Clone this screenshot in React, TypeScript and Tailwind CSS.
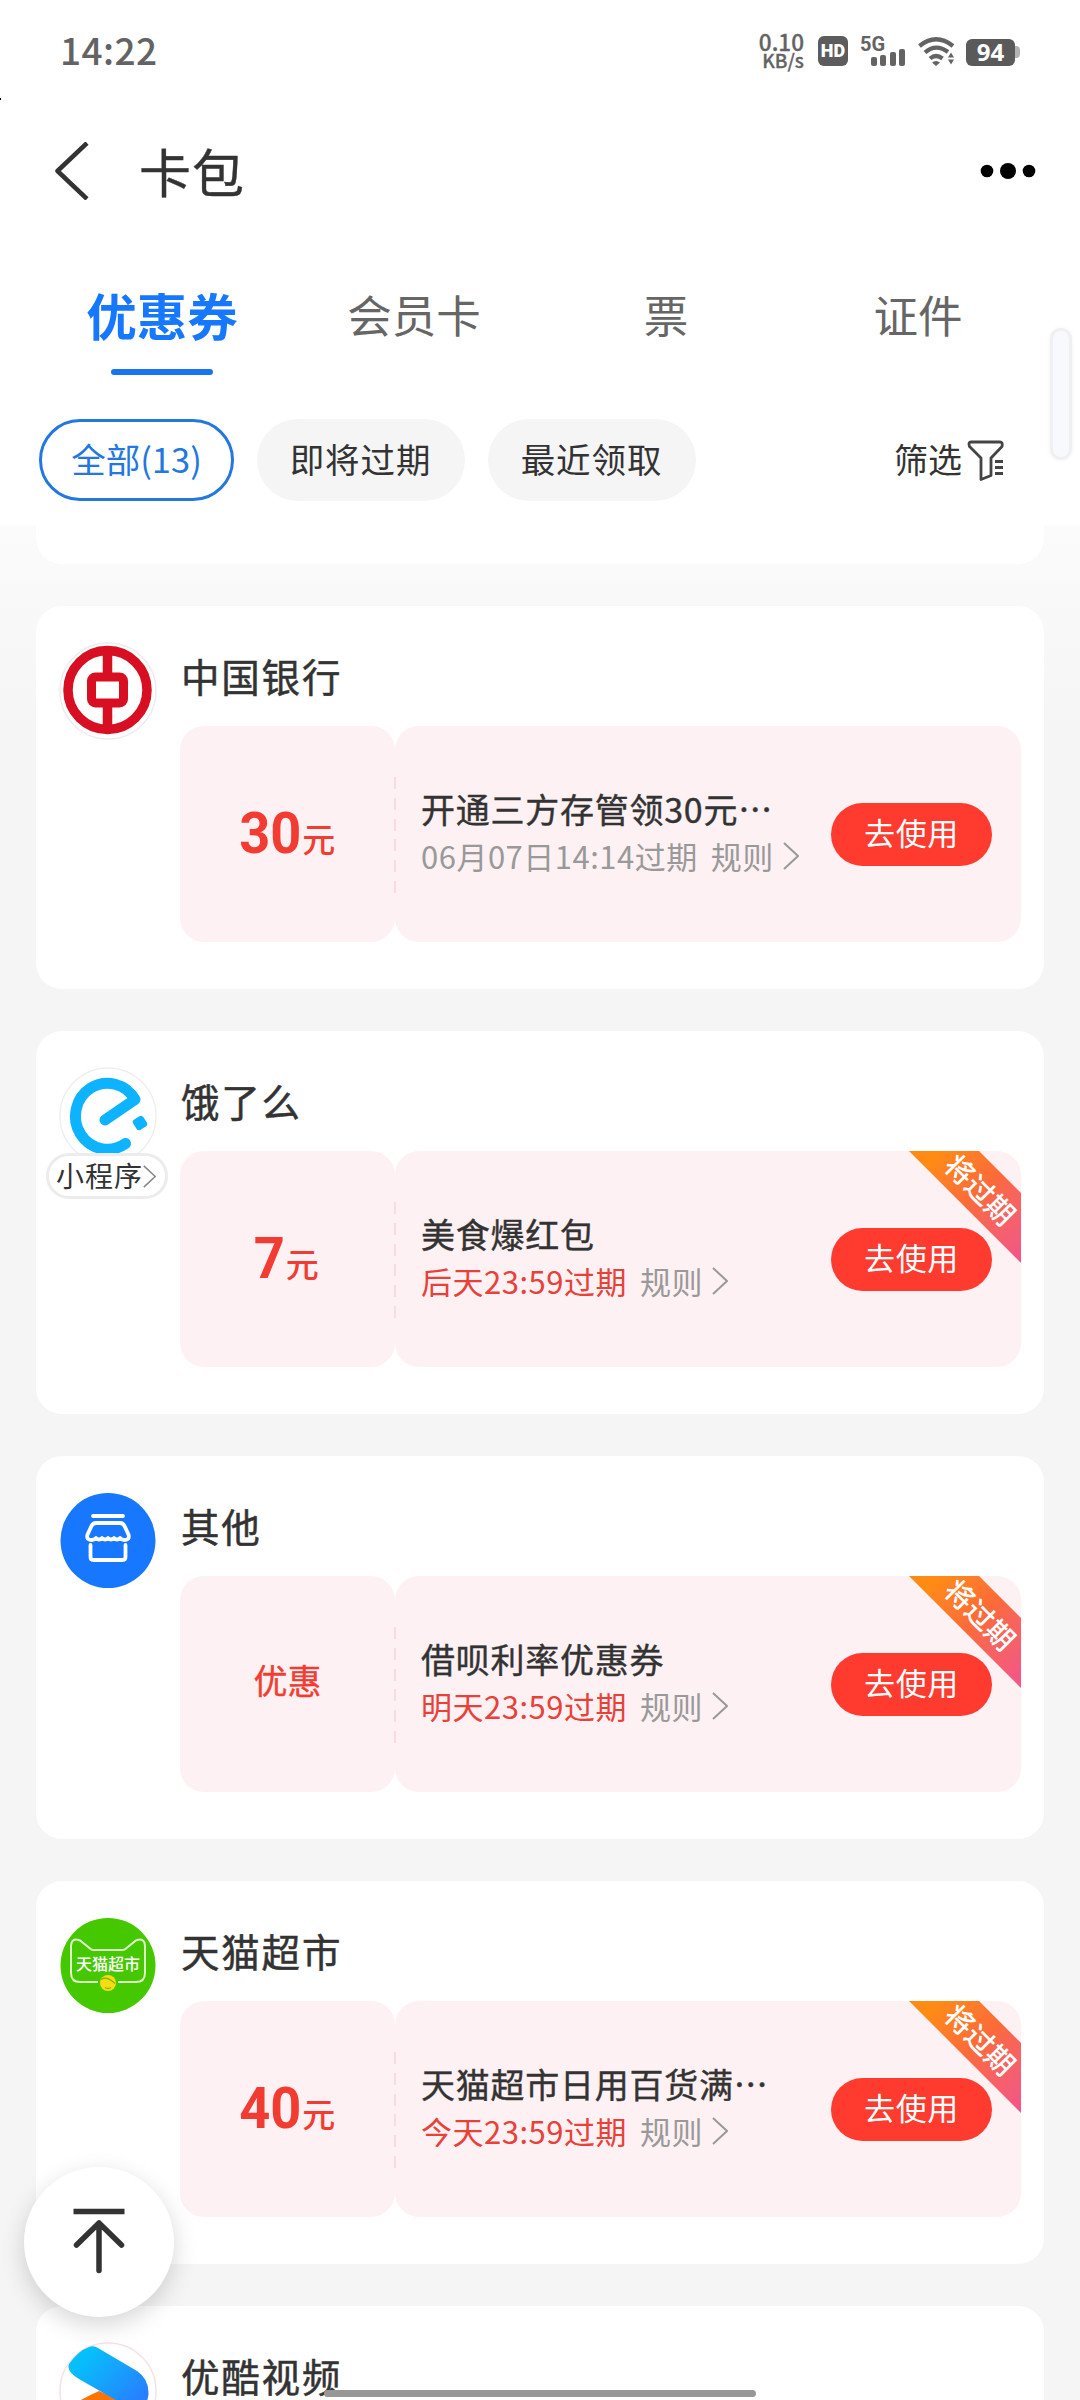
import type { ReactNode } from "react";

type Offer = {
  amount?: string;
  title: string;
  expire: string;
  urgent?: boolean;
};

type Shop = {
  name: string;
  logo: ReactNode;
  mini?: boolean;
  offer?: Offer;
};

function BankLogo() {
  return (
    <svg viewBox="0 0 98 98" className="size-[98px]">
      <circle cx="49" cy="49" r="48" fill="#fff" stroke="#ececec" strokeWidth="1.5" />
      <g transform="translate(-0.5 -1)">
        <circle cx="49" cy="49" r="39.5" fill="none" stroke="#d80f22" strokeWidth="9.5" />
        <rect x="33" y="36" width="32" height="26" rx="4" fill="none" stroke="#d80f22" strokeWidth="9" />
        <path d="M49 12v21M49 66v21" stroke="#d80f22" strokeWidth="9.5" />
      </g>
    </svg>
  );
}

function ElemeLogo() {
  return (
    <svg viewBox="0 0 98 98" className="size-[98px]">
      <circle cx="49" cy="49" r="48" fill="#fff" stroke="#efefef" strokeWidth="1.5" />
      <path
        d="M46 53 L76 32.5 A32 33 0 1 0 66.500 76.5"
        fill="none"
        stroke="#0eb3ff"
        strokeWidth="11"
        strokeLinecap="round"
        strokeLinejoin="round"
      />
      <rect x="75" y="50" width="12" height="12" rx="3" fill="#0eb3ff" transform="rotate(-32 81 56)" />
    </svg>
  );
}

function OtherLogo() {
  return (
    <svg viewBox="0 0 98 98" className="size-[98px]">
      <circle cx="49" cy="48.5" r="47.5" fill="#1777ff" />
      <g fill="none" stroke="#fff" strokeWidth="3.800" strokeLinecap="round" strokeLinejoin="round">
        <path d="M34 24h30" />
        <path d="M37 31h24q3 0 4.500 3l4 8.500q1.500 5.500-4 5.500-3 0-4.500-2-3 3-6 0-3 3-6 0-3 3-6 0-3 3-6 0-1.500 2-4.500 2-5.500 0-4-5.500l4-8.500q1.500-3 4.500-3z" />
        <path d="M31.500 53v12q0 3 3 3h29q3 0 3-3v-12" />
      </g>
    </svg>
  );
}

function TmallLogo() {
  return (
    <div className="relative size-[98px]">
      <svg viewBox="0 0 98 98" className="size-[98px]">
        <circle cx="49" cy="48.500" r="47.500" fill="#45c800" />
        <path
          d="M39 65H21q-9 0-9-9V30q0-10 9-6.500l10 8q1.500 1.500 3.500 1.500h29q2 0 3.500-1.500l10-8q9-3.500 9 6.500v26q0 9-9 9H59"
          fill="none"
          stroke="#dcf6c8"
          strokeWidth="2"
        />
        <circle cx="49" cy="66" r="8" fill="#f6dc12" />
        <path d="M42 62.500q6-4 14 4M46 70.500q3 2 6 0" fill="none" stroke="#8db400" strokeWidth="1.500" />
      </svg>
      <span className="absolute inset-x-0 top-[34px] text-center text-[16px] leading-[24px] font-medium whitespace-nowrap text-white">
        天猫超市
      </span>
    </div>
  );
}

function YoukuLogo() {
  return (
    <svg viewBox="0 0 98 98" className="size-[98px]">
      <defs>
        <linearGradient id="yk" x1="0" y1="0" x2="1" y2="0.8">
          <stop offset="0.2" stopColor="#06c0fb" />
          <stop offset="1" stopColor="#2a7bff" />
        </linearGradient>
      </defs>
      <circle cx="49" cy="49" r="48" fill="#fff" stroke="#f3e3e8" strokeWidth="1.500" />
      <path d="M10 66 Q18 59 40 49 L66 60 L30 86 Z" fill="#fb7404" />
      <path
        d="M10 22 Q19 9 30 5 Q35 3 39 6 L78 29 Q90 37 89.500 52 Q88 68 74 68 L20 37 Q7 29 10 22Z"
        fill="url(#yk)"
      />
    </svg>
  );
}

const shops: Shop[] = [
  { name: "中国银行", logo: <BankLogo />, offer: { amount: "30", title: "开通三方存管领30元…", expire: "06月07日14:14过期" } },
  { name: "饿了么", logo: <ElemeLogo />, mini: true, offer: { amount: "7", title: "美食爆红包", expire: "后天23:59过期", urgent: true } },
  { name: "其他", logo: <OtherLogo />, offer: { title: "借呗利率优惠券", expire: "明天23:59过期", urgent: true } },
  { name: "天猫超市", logo: <TmallLogo />, offer: { amount: "40", title: "天猫超市日用百货满…", expire: "今天23:59过期", urgent: true } },
  { name: "优酷视频", logo: <YoukuLogo /> },
];

function StatusBar() {
  return (
    <div className="flex h-[102px] shrink-0 items-center justify-between pr-[60px] pl-[60px] text-[#636363]">
      <span className="-mt-[4px] text-[37px] leading-none font-medium tracking-[0.400px]">14:22</span>
      <div className="flex items-center">
        <div className="mr-[14px] -mt-[2px] flex w-[45px] flex-col items-end font-medium [-webkit-text-stroke:0.300px]">
          <span className="text-[22.500px] leading-[20px]">0.10</span>
          <span className="text-[19px] leading-[18px]">KB/s</span>
        </div>
        <div className="mr-[12px] flex h-[30px] w-[30px] items-center justify-center rounded-[6px] bg-[#5c5c5c]">
          <span className="font-['Roboto'] text-[18px] leading-none font-black text-white">HD</span>
        </div>
        <div className="relative mr-[13px] h-[30px] w-[45px]">
          <span className="absolute -top-px left-0 font-['Roboto'] text-[20px] leading-[18px] font-bold">5G</span>
          <div className="absolute right-0 bottom-0 flex items-end gap-[3.5px]">
            <i className="h-[9px] w-[6px] rounded-[2px] bg-[#636363]" />
            <i className="h-[11px] w-[6px] rounded-[2px] bg-[#636363]" />
            <i className="h-[14px] w-[6px] rounded-[2px] bg-[#636363]" />
            <i className="h-[17px] w-[6px] rounded-[2px] bg-[#636363]" />
          </div>
        </div>
        <svg viewBox="0 0 38 30" className="mr-[10px] h-[30px] w-[38px]">
          <g fill="none" stroke="#636363" strokeWidth="4.200">
            <path d="M1.500 10 Q18 -3.500 35 10" />
            <path d="M7 16.500 Q18 7 30 16" />
            <path d="M12 22.500 Q18 17.500 24.500 22.500" />
          </g>
          <path d="M14 26.500 Q18 23.500 22 26.500 L18 30z" fill="#636363" />
          <path d="M30 21.500l3-5 3 5zM30 23.500l3 5 3-5z" fill="#636363" />
        </svg>
        <div className="mt-[2px] flex items-center">
          <div className="flex h-[27px] w-[49px] items-center justify-center rounded-[6px] bg-[#5a5a5a]">
            <span className="font-['Open_Sans'] text-[24px] leading-none font-bold text-white">94</span>
          </div>
          <i className="h-[12px] w-[5px] rounded-r-[4px] bg-[#b3b3b3]" />
        </div>
      </div>
    </div>
  );
}

function Chevron({ className }: { className: string }) {
  return (
    <svg viewBox="0 0 16 28" className={className} fill="none" stroke="currentColor" strokeWidth="2">
      <path d="M1 1l14 13L1 27" />
    </svg>
  );
}

function Ribbon() {
  return (
    <div className="absolute top-0 right-0 size-[112px]">
      <i className="block size-full bg-linear-to-br from-[#ff8a14] from-15% via-[#fb6a38] via-50% to-[#f2558a] [clip-path:polygon(0_0,70px_0,112px_42px,112px_112px)]" />
      <span className="absolute top-[21px] left-[27px] w-[90px] rotate-45 text-center text-[28.500px] leading-[34px] font-medium whitespace-nowrap text-white">
        将过期
      </span>
    </div>
  );
}

function OfferPanel({ offer }: { offer: Offer }) {
  return (
    <div className="relative flex h-[216px]">
      <div className="flex w-[215px] items-center justify-center rounded-[24px] bg-[#fef1f3] text-[#f23c32]">
        {offer.amount ? (
          <div className="mr-[4px] flex items-baseline font-medium">
            <span className="origin-right scale-x-95 font-['Roboto'] text-[57px] leading-[72px] font-bold">{offer.amount}</span>
            <span className="relative -top-px ml-px text-[33px] leading-none">元</span>
          </div>
        ) : (
          <span className="-mt-[8px] text-[34px] leading-none [-webkit-text-stroke:0.400px]">优惠</span>
        )}
      </div>
      <div className="relative flex grow items-center justify-between overflow-hidden rounded-[24px] bg-[#fef1f3] pr-[29px] pl-[26px]">
        <div className="-mt-[4px] flex flex-col">
          <h3 className="text-[34px] leading-[48px] tracking-[0.750px] whitespace-nowrap text-[#333] [-webkit-text-stroke:0.400px]">
            {offer.title}
          </h3>
          <div className="flex items-center text-[31px] leading-[46px] tracking-[0.500px] whitespace-nowrap text-[#999]">
            <span className={offer.urgent ? "text-[#e8413a]" : ""}>{offer.expire}</span>
            <span className="ml-[13px]">规则</span>
            <Chevron className="ml-[9px] h-[28px] w-[16px]" />
          </div>
        </div>
        {offer.urgent && <Ribbon />}
        <button className="relative h-[63px] w-[161px] shrink-0 rounded-full bg-[#ff3b30] pb-[4px] text-[31px] leading-[56px] tracking-[0.700px] text-white">
          去使用
        </button>
      </div>
      <i className="absolute top-[51px] left-[214px] h-[116px] w-[2px] bg-[repeating-linear-gradient(to_bottom,#f8dcdf_0_12px,transparent_12px_20.800px)]" />
    </div>
  );
}

function ShopCard({ shop }: { shop: Shop }) {
  return (
    <section className="flex h-[383px] shrink-0 rounded-[26px] bg-white pt-[36px] pr-[23px] pl-[23px]">
      <div className="relative h-[98px] w-[121px] shrink-0">
        {shop.logo}
        {shop.mini && (
          <div className="absolute top-[86px] -left-[13px] flex h-[46px] w-[122px] items-center rounded-full border-[3px] border-[#ececec] bg-white pl-[7px] text-[#333]">
            <span className="-mt-[2px] text-[28px] leading-none tracking-[1px]">小程序</span>
            <Chevron className="h-[23px] w-[13px] text-[#888]" />
          </div>
        )}
      </div>
      <div className="flex grow flex-col">
        <h2 className="flex h-[84px] items-start pt-[4px] pl-px text-[38.500px] leading-[58px] tracking-[1.800px] text-[#333] [-webkit-text-stroke:0.500px]">
          {shop.name}
        </h2>
        {shop.offer && <OfferPanel offer={shop.offer} />}
      </div>
    </section>
  );
}

export default function App() {
  return (
    <div
      lang="zh-CN"
      className="relative flex h-[2400px] w-[1080px] flex-col overflow-hidden bg-[#f5f5f5] font-['Noto_Sans_CJK_SC',sans-serif]"
    >
      <header className="flex h-[525px] shrink-0 flex-col bg-white">
        <StatusBar />
        <div className="flex h-[138px] items-center pr-[44px] pl-[54px]">
          <svg viewBox="0 0 36 58" className="h-[58px] w-[36px]" fill="none" stroke="#333" strokeWidth="4.500">
            <path d="M33 1L3.500 29L33 57" strokeLinejoin="round" />
          </svg>
          <h1 className="ml-[49px] grow text-[52px] leading-none tracking-[1px] text-[#333] [-webkit-text-stroke:0.400px]">卡包</h1>
          <svg viewBox="0 0 56 18" className="h-[18px] w-[56px]">
            <circle cx="7" cy="9" r="6.300" />
            <circle cx="28" cy="9" r="8" />
            <circle cx="49" cy="9" r="6.300" />
          </svg>
        </div>
        <nav className="mx-[36px] grid h-[179px] grid-cols-4 text-[44.500px] text-[#666]">
          <div className="flex flex-col items-center pt-[39px]">
            <span className="h-[90px] text-[50.500px] leading-[70px] font-bold text-[#1677ff]">优惠券</span>
            <i className="h-[6px] w-[102px] rounded-full bg-[#1b74ef]" />
          </div>
          <div className="pt-[39px] text-center leading-[70px]">会员卡</div>
          <div className="pt-[39px] text-center leading-[70px]">票</div>
          <div className="pt-[39px] text-center leading-[70px]">证件</div>
        </nav>
        <div className="flex h-[82px] items-center pr-[76px] pl-[39px] text-[34.500px] text-[#333]">
          <span className="flex h-[82px] w-[195px] items-center justify-center rounded-full border-[3px] border-[#2377e0] pb-[3px] text-[#2377e0]">
            全部(13)
          </span>
          <span className="ml-[23px] flex h-[82px] w-[208px] items-center justify-center rounded-full bg-[#f5f5f5] pr-px pb-[3px] tracking-[0.900px]">
            即将过期
          </span>
          <span className="ml-[23px] flex h-[82px] w-[208px] items-center justify-center rounded-full bg-[#f5f5f5] pr-px pb-[3px] tracking-[0.900px]">
            最近领取
          </span>
          <span className="ml-auto pb-[3px] text-[34px]">筛选</span>
          <svg
            viewBox="0 0 37 41"
            className="ml-[5px] h-[41px] w-[37px]"
            fill="none"
            stroke="#444"
            strokeWidth="2.800"
            strokeLinejoin="round"
          >
            <path d="M4 2h29q3 0 2 4.500L24 18v17.500l-10 4V18L2.500 6.500Q1 2 4 2z" />
            <path d="M28 21.500h8M28 27.500h8M28 33.500h8" />
          </svg>
        </div>
      </header>

      <main className="flex grow flex-col gap-[42px] bg-linear-to-b from-[#fbfbfb] to-[#f5f5f5] to-[215px] px-[36px]">
        <div className="h-[39px] shrink-0 rounded-b-[26px] bg-white" />
        {shops.map((shop) => (
          <ShopCard key={shop.name} shop={shop} />
        ))}
      </main>

      <i className="absolute top-[328px] right-[8px] h-[132px] w-[22px] rounded-full border-[3px] border-[#f0f0f2] bg-[#f8f9fd] shadow-[0_0_4px_rgba(0,0,0,0.05)]" />
      <i className="absolute top-[98px] left-0 h-[2px] w-px bg-black" />
      <button className="absolute top-[2167px] left-[24px] flex size-[150px] items-center justify-center rounded-full bg-white shadow-[0_8px_24px_rgba(0,0,0,0.16)]">
        <svg viewBox="0 0 54 68" className="h-[68px] w-[54px]" fill="none" stroke="#333" strokeWidth="5.500">
          <path d="M1.500 3.500h51" />
          <path d="M27 62.500V15M4.500 37l22.500-22 22.500 22" strokeLinecap="round" strokeLinejoin="round" />
        </svg>
      </button>
      <i className="absolute top-[2390px] left-[324px] h-[7px] w-[432px] rounded-full bg-[#979797]" />
    </div>
  );
}
